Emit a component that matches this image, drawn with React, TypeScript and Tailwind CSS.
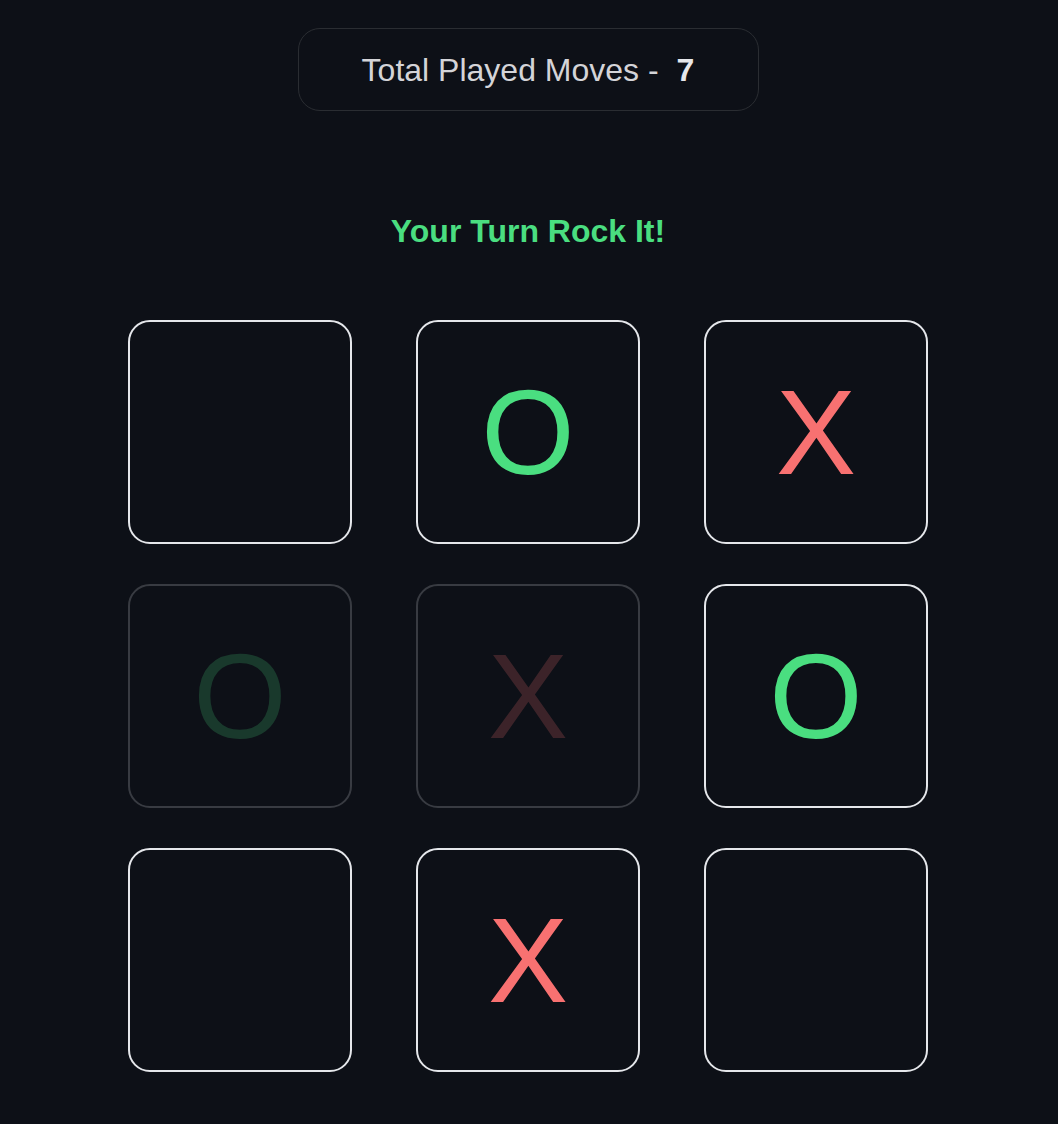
import React from 'react';

type Mark = 'X' | 'O' | null;

const board: { mark: Mark; dim?: boolean }[] = [
  { mark: null },
  { mark: 'O' },
  { mark: 'X' },
  { mark: 'O', dim: true },
  { mark: 'X', dim: true },
  { mark: 'O' },
  { mark: null },
  { mark: 'X' },
  { mark: null },
];

const App = () => {
  return (
    <div
      className="min-h-screen bg-[#0d1017] flex flex-col items-center pr-[2px]"
      style={{ fontFamily: '"Liberation Sans", Arial, sans-serif' }}
    >
      <div className="mt-[28px] w-[461px] h-[83px] border border-[#2a2d32] rounded-[22px] flex items-center justify-center text-[32px] text-[#d4d4d8]">
        Total Played Moves -
        <span className="font-bold ml-[18px] text-[#e5e7eb]">7</span>
      </div>

      <h2 className="mt-[101px] text-[32px] leading-[38px] font-bold text-[#4ade80]">
        Your Turn Rock It!
      </h2>

      <div className="mt-[70px] grid grid-cols-[repeat(3,224px)] gap-x-16 gap-y-10">
        {board.map((cell, i) => (
          <div
            key={i}
            className={
              'w-[224px] h-[224px] rounded-[22px] border-2 border-[#e5e7eb] flex items-center justify-center text-[120px] leading-none ' +
              (cell.dim ? 'opacity-20' : '')
            }
          >
            {cell.mark === 'O' && <span className="text-[#4ade80]">O</span>}
            {cell.mark === 'X' && <span className="text-[#f87171]">X</span>}
          </div>
        ))}
      </div>
    </div>
  );
};

export default App;
